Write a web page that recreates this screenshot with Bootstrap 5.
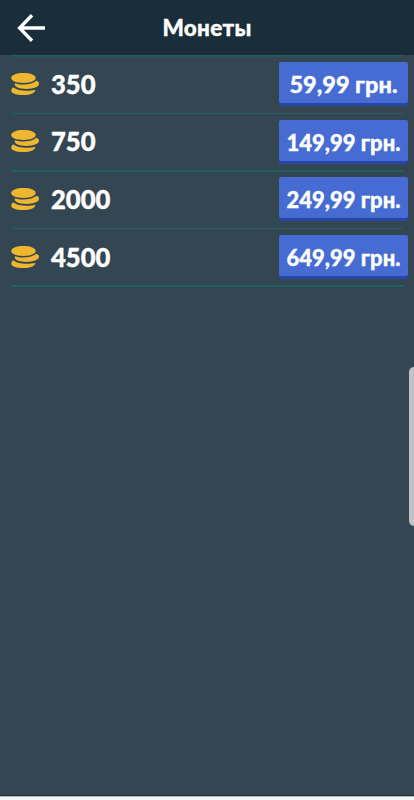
<!DOCTYPE html>
<html lang="ru">
<head>
<meta charset="utf-8">
<meta name="viewport" content="width=device-width, initial-scale=1">
<title>Монеты</title>
<link href="https://cdn.jsdelivr.net/npm/bootstrap@5.3.0/dist/css/bootstrap.min.css" rel="stylesheet">
<style>
body{background:#334652;color:#fff;font-family:Lato,"Open Sans",sans-serif;height:800px;overflow:hidden}
.topbar{height:55px;background:#1a2d3a}
.back-btn{width:28px;margin-left:17px}
.page-title{font-size:22.5px;font-weight:900;line-height:30px;padding-right:45px;letter-spacing:.3px;-webkit-text-stroke:.35px #fff}
.offers{margin-left:11px;margin-right:6px;padding-top:1.4px;background:linear-gradient(#20605f,#20605f) 0 0/calc(100% - 5px) 1.5px no-repeat}
.offer{height:57.6px;padding-bottom:2.6px}
.offer::after{content:"";order:9;align-self:flex-end;width:392px;height:1.4px;margin:0 0 -2.6px -392px;background:#20605f;flex-shrink:0;transform:translateX(-5px)}
.amount{font-size:25.6px;font-weight:900;line-height:30px;margin-left:12px;-webkit-text-stroke:.4px #fff}
.buy{width:129px;height:41px;border:0;border-radius:2px;background:#466cd3;box-shadow:0 3px 0 #2447a8;color:#fff;font-weight:900;font-size:22px;line-height:41px;white-space:nowrap;margin-bottom:2.4px;padding:2px 0 0;-webkit-text-stroke:.3px #fff}
.buy-wide{font-size:23.5px}
.edge-panel{right:0;top:367px;width:5px;height:159px;background:#c0c2ca;border-radius:6px 0 0 6px}
.bottom-strip{height:4px;background:#f2f6f8;border-top:1px solid #aeb8bf;box-shadow:0 -1px 0 #1f303d}
</style>
</head>
<body class="d-flex flex-column m-0">
<svg class="d-none"><symbol id="coins" viewBox="0 0 28 22"><path fill="#efb62f" d="M12.5 0C19.8 0 24.7 2.1 24.7 5C24.7 8 19.5 9.9 12.5 9.9C5.2 9.9 .2 8 .2 5C.2 2.1 5.2 0 12.5 0ZM4 10.3C10 12.4 20.3 12 25.4 7.7C27.2 8.4 28 9.4 28 10.8C28 14 22.4 15.9 15.5 15.9C8.8 15.9 3.8 14.2 3.8 11.6Q3.8 10.8 4 10.3ZM2.2 14.2C6.5 18 17.5 18.4 24.4 16.7C24.2 20.2 19.3 22 12.5 22C5.2 22 .2 20.2 .2 17.4Q.2 15.5 2.2 14.2Z"/></symbol></svg>
<header class="topbar d-flex align-items-center flex-shrink-0">
<a class="back-btn d-flex flex-shrink-0" href="#" aria-label="Назад"><svg width="28" height="28" viewBox="0 0 28 28" fill="none" stroke="#fff" stroke-width="3.4"><path d="M15 1.2L2.6 14L15 26.8M2.4 14H28"/></svg></a>
<h1 class="page-title flex-grow-1 text-center mb-0">Монеты</h1>
</header>
<main class="flex-grow-1">
<div class="offers">
<div class="offer d-flex align-items-center"><svg width="28" height="22"><use href="#coins"/></svg><span class="amount">350</span><button class="buy buy-wide ms-auto">59,99 грн.</button></div>
<div class="offer d-flex align-items-center"><svg width="28" height="22"><use href="#coins"/></svg><span class="amount">750</span><button class="buy ms-auto">149,99 грн.</button></div>
<div class="offer d-flex align-items-center"><svg width="28" height="22"><use href="#coins"/></svg><span class="amount">2000</span><button class="buy ms-auto">249,99 грн.</button></div>
<div class="offer d-flex align-items-center"><svg width="28" height="22"><use href="#coins"/></svg><span class="amount">4500</span><button class="buy ms-auto">649,99 грн.</button></div>
</div>
</main>
<div class="edge-panel position-absolute"></div>
<footer class="bottom-strip flex-shrink-0"></footer>
<script src="https://cdn.jsdelivr.net/npm/bootstrap@5.3.0/dist/js/bootstrap.bundle.min.js"></script>
</body>
</html>
